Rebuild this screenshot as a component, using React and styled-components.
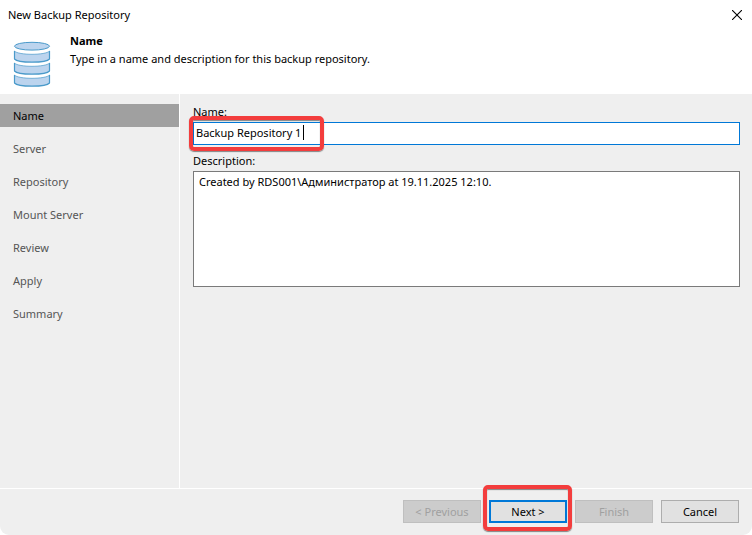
import { useState } from "react";
import styled, { createGlobalStyle } from "styled-components";

const steps = [
  "Name",
  "Server",
  "Repository",
  "Mount Server",
  "Review",
  "Apply",
  "Summary",
];

const App = () => {
  const [step, setStep] = useState(0);
  const [name, setName] = useState("Backup Repository 1");
  const [description, setDescription] = useState(
    "Created by RDS001\\Администратор at 19.11.2025 12:10."
  );

  return (
    <>
      <GlobalStyle />
      <DialogC>
        <TitleBarC>
          <span>New Backup Repository</span>
          <CloseC type="button" aria-label="Close">
            <svg width="10" height="10" viewBox="0 0 10 10">
              <path d="M0 0L10 10M10 0L0 10" stroke="#000" strokeWidth="1.1" />
            </svg>
          </CloseC>
        </TitleBarC>

        <HeaderC>
          <DatabaseIcon />
          <div>
            <HeadingC>{steps[step]}</HeadingC>
            <IntroC>
              Type in a name and description for this backup repository.
            </IntroC>
          </div>
        </HeaderC>

        <BodyC>
          <StepsC>
            {steps.map((label, i) => (
              <StepC
                key={label}
                type="button"
                $active={i === step}
                onClick={() => setStep(i)}
              >
                {label}
              </StepC>
            ))}
          </StepsC>

          <FormC>
            <LabelC htmlFor="name">Name:</LabelC>
            <FieldC>
              <InputC
                id="name"
                value={name}
                onChange={(e) => setName(e.target.value)}
              />
              <CaretC />
              <NameMarkC />
            </FieldC>
            <LabelC htmlFor="description">Description:</LabelC>
            <TextareaC
              id="description"
              value={description}
              onChange={(e) => setDescription(e.target.value)}
            />
          </FormC>
        </BodyC>

        <FooterC>
          <ButtonC type="button" disabled>
            &lt; Previous
          </ButtonC>
          <FieldC>
            <ButtonC type="button" $primary>
              Next &gt;
            </ButtonC>
            <NextMarkC />
          </FieldC>
          <ButtonC type="button" disabled>
            Finish
          </ButtonC>
          <ButtonC type="button">Cancel</ButtonC>
        </FooterC>
      </DialogC>
    </>
  );
};

const DatabaseIcon = () => (
  <svg width="38" height="47" viewBox="0 0 38 47">
    <g fill="#bcd4ee" stroke="#4a9aca" strokeWidth="1">
      <ellipse cx="19" cy="5.2" rx="17.5" ry="3.9" />
      {[10, 22, 34].map((y) => (
        <g key={y}>
          <path
            stroke="none"
            d={`M1.5 ${y}C5 ${y + 4.4} 33 ${y + 4.4} 36.5 ${y}V${y + 8}C33 ${
              y + 12.2
            } 5 ${y + 12.2} 1.5 ${y + 8}Z`}
          />
          <path
            fill="none"
            strokeOpacity="0.7"
            d={`M1.5 ${y}C5 ${y + 4.4} 33 ${y + 4.4} 36.5 ${y}`}
          />
          <path
            fill="none"
            strokeWidth="1.2"
            d={`M1.5 ${y}V${y + 8}C5 ${y + 12.2} 33 ${y + 12.2} 36.5 ${
              y + 8
            }V${y}`}
          />
        </g>
      ))}
    </g>
  </svg>
);

export default App;

const GlobalStyle = createGlobalStyle`
  * {
    box-sizing: border-box;
  }

  body {
    margin: 0;
    background-color: #fff;
  }

  body, button, input, textarea {
    font-family: "Noto Sans", "Open Sans", sans-serif;
    font-size: 11px;
    line-height: 18px;
    color: #000;
  }
`;

const DialogC = styled.main`
  display: flex;
  flex-direction: column;
  min-height: 100vh;
  overflow: hidden;
  background-color: #efefef;
  border-radius: 0 0 9px 9px;
`;

const TitleBarC = styled.div`
  display: flex;
  justify-content: space-between;
  align-items: center;
  height: 30px;
  padding-left: 8px;
  background-color: #fff;
`;

const CloseC = styled.button`
  display: flex;
  justify-content: center;
  align-items: center;
  width: 30px;
  height: 28px;
  padding: 0;
  border: none;
  background-color: inherit;
`;

const HeaderC = styled.header`
  display: flex;
  gap: 19px;
  height: 64px;
  padding: 2px 13px;
  background-color: #fff;

  svg {
    margin-top: 9px;
  }
`;

const HeadingC = styled.h1`
  margin: 0;
  font-size: 11px;
  font-weight: 700;
`;

const IntroC = styled.p`
  margin: 0;
`;

const BodyC = styled.div`
  display: flex;
  flex: 1;
`;

const StepsC = styled.nav`
  display: flex;
  flex-direction: column;
  gap: 10px;
  width: 180px;
  padding-top: 10px;
  border-right: 1px solid #fff;
`;

const StepC = styled.button`
  height: 23px;
  padding: 0 13px;
  border: none;
  text-align: left;
  color: ${({ $active }) => ($active ? "#000" : "#555")};
  background-color: ${({ $active }) => ($active ? "#a0a0a0" : "transparent")};
`;

const FormC = styled.form`
  display: flex;
  flex-direction: column;
  flex: 1;
  padding: 9px 12px 0 13px;
`;

const LabelC = styled.label`
  height: 19px;
  line-height: 18px;

  div + & {
    height: 26px;
    padding-top: 7px;
  }
`;

const FieldC = styled.div`
  position: relative;
  display: flex;
`;

const InputC = styled.input`
  width: 100%;
  height: 23px;
  padding: 0 2px 2px;
  border: 1px solid #0078d7;
  outline: none;
  background-color: #fff;
`;

const TextareaC = styled.textarea`
  height: 116px;
  padding: 1px 5px;
  border: 1px solid #7a7a7a;
  outline: none;
  resize: none;
  background-color: #fff;
`;

const CaretC = styled.span`
  position: absolute;
  top: 3px;
  left: 110px;
  width: 1px;
  height: 15px;
  background-color: #000;
`;

const MarkC = styled.span`
  position: absolute;
  border: 5px solid #f33d3d;
  border-radius: 5px;
  box-shadow: 0 1px 1px rgba(60, 60, 60, 0.6),
    inset 0 1px 1px rgba(60, 60, 60, 0.6);
  pointer-events: none;
`;

const NameMarkC = styled(MarkC)`
  top: -6px;
  left: -4px;
  width: 135px;
  height: 35px;
  border-width: 4px;
`;

const NextMarkC = styled(MarkC)`
  top: -15px;
  left: -6px;
  width: 89px;
  height: 46px;
  border-width: 4px;
`;

const FooterC = styled.footer`
  display: flex;
  justify-content: flex-end;
  gap: 8px;
  height: 47px;
  padding: 11px 13px 0 0;
  border-top: 1px solid #fff;
`;

const ButtonC = styled.button`
  width: 78px;
  height: 23px;
  padding: 0;
  border: ${({ $primary }) =>
    $primary ? "2px solid #0078d7" : "1px solid #adadad"};
  background-color: #e1e1e1;

  &:disabled {
    color: #a0a0a0;
    border-color: #bfbfbf;
    background-color: #cccccc;
  }
`;
